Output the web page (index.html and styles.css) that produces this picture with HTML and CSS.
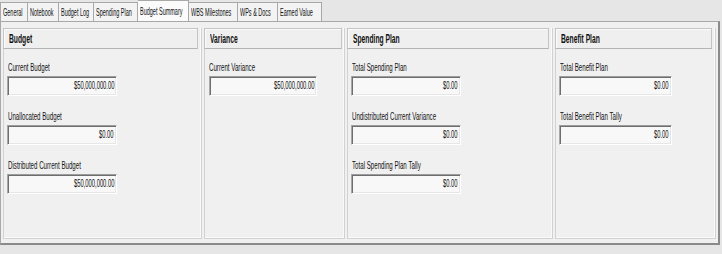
FILE: index.html
```html
<!DOCTYPE html>
<html lang="en">
<head>
  <meta charset="utf-8">
  <title>Budget Summary</title>
  <link rel="stylesheet" href="styles.css">
</head>
<body>

  <!-- Tab strip -->
  <div class="tabs">
    <div class="tab"><span class="t">General</span></div>
    <div class="tab"><span class="t">Notebook</span></div>
    <div class="tab"><span class="t">Budget Log</span></div>
    <div class="tab"><span class="t">Spending Plan</span></div>
    <div class="tab active"><span class="t">Budget Summary</span></div>
    <div class="tab"><span class="t">WBS Milestones</span></div>
    <div class="tab"><span class="t">WPs &amp; Docs</span></div>
    <div class="tab"><span class="t">Earned Value</span></div>
  </div>

  <div class="panel">

    <!-- Budget -->
    <div class="group budget">
      <div class="group-head"><span class="t">Budget</span></div>
      <div class="field">
        <div class="label"><span class="t">Current Budget</span></div>
        <div class="box"><span class="t v">$50,000,000.00</span></div>
      </div>
      <div class="field">
        <div class="label"><span class="t">Unallocated Budget</span></div>
        <div class="box"><span class="t v">$0.00</span></div>
      </div>
      <div class="field">
        <div class="label"><span class="t">Distributed Current Budget</span></div>
        <div class="box"><span class="t v">$50,000,000.00</span></div>
      </div>
    </div>

    <!-- Variance -->
    <div class="group variance">
      <div class="group-head"><span class="t">Variance</span></div>
      <div class="field">
        <div class="label"><span class="t">Current Variance</span></div>
        <div class="box narrow"><span class="t v">$50,000,000.00</span></div>
      </div>
    </div>

    <!-- Spending Plan -->
    <div class="group spending">
      <div class="group-head"><span class="t">Spending Plan</span></div>
      <div class="field">
        <div class="label"><span class="t">Total Spending Plan</span></div>
        <div class="box"><span class="t v">$0.00</span></div>
      </div>
      <div class="field">
        <div class="label"><span class="t">Undistributed Current Variance</span></div>
        <div class="box"><span class="t v">$0.00</span></div>
      </div>
      <div class="field">
        <div class="label"><span class="t">Total Spending Plan Tally</span></div>
        <div class="box"><span class="t v">$0.00</span></div>
      </div>
    </div>

    <!-- Benefit Plan -->
    <div class="group benefit">
      <div class="group-head"><span class="t">Benefit Plan</span></div>
      <div class="field">
        <div class="label"><span class="t">Total Benefit Plan</span></div>
        <div class="box wide"><span class="t v">$0.00</span></div>
      </div>
      <div class="field">
        <div class="label"><span class="t">Total Benefit Plan Tally</span></div>
        <div class="box wide"><span class="t v">$0.00</span></div>
      </div>
    </div>

  </div>

</body>
</html>
```

FILE: styles.css
```css
* {
  box-sizing: border-box;
}

body {
  margin: 0;
  background-color: #e6e6e6;
  font-family: 'Liberation Sans', Arial, sans-serif;
  font-size: 11px;
  color: #111;
}

/* the original UI font is very narrow, so squeeze the glyphs */
.t {
  display: inline-block;
  white-space: nowrap;
  transform: scaleX(0.56);
  transform-origin: left center;
}

.t.v {
  transform: scaleX(0.53);
  transform-origin: right center;
}

/* ---- tabs ---- */
.tabs {
  display: grid;
  grid-template-columns: 28px 31px 35px 44px 51px 49px 40px 44px;
  align-items: end;
  height: 21px;
}

.tab {
  height: 19px;
  line-height: 18px;
  padding-left: 2px;
  background-color: #f3f3f3;
  border: 1px solid #a8a8a8;
  border-left: none;
  border-bottom: none;
}

.tab .t {
  transform: scaleX(0.5);
}

.tab:first-child {
  border-left: 1px solid #a8a8a8;
}

.tab.active {
  height: 21px;
  line-height: 20px;
  background-color: #fbfbfb;
}

/* ---- main panel ---- */
.panel {
  display: flex;
  gap: 2px;
  width: 720px;
  height: 224px;
  padding: 6px 0 0 2px;
  background-color: #f0f0f0;
  border: 1px solid #a8a8a8;
  border-right: 2px solid #8a8a8a;
  border-bottom: 2px solid #8a8a8a;
}

.group {
  height: 211px;
  border: 1px solid #d2d2d2;
  border-top: none;
  box-shadow: inset -1px -1px 0 #fafafa;
  padding-left: 3px;
}

.budget { width: 199px; }
.variance { width: 141px; }
.spending { width: 206px; }
.benefit { width: 161px; }

.group-head {
  height: 21px;
  line-height: 21px;
  margin: 0 3px 12px -4px;
  padding-left: 5px;
  font-size: 12px;
  font-weight: bold;
  background-color: #efefef;
  border: 1px solid #c4c4c4;
  border-bottom-color: #b4b4b4;
  box-shadow: inset 1px 1px 0 #fbfbfb;
}

.variance .group-head {
  margin-right: 2px;
}

.field {
  margin-bottom: 14px;
}

.label {
  height: 12px;
  line-height: 12px;
  margin-bottom: 3px;
  padding-left: 1px;
}

.box {
  width: 110px;
  height: 20px;
  line-height: 17px;
  padding-right: 2px;
  text-align: right;
  background-color: #f8f8f8;
  border: 1px solid;
  border-color: #9c9c9c #ffffff #ffffff #a8a8a8;
  box-shadow: inset 1px 1px 0 #6e6e6e, inset -1px -1px 0 #e6e6e6;
}

.box.narrow {
  width: 108px;
  margin-left: 1px;
}

.box.wide {
  width: 113px;
}
```
